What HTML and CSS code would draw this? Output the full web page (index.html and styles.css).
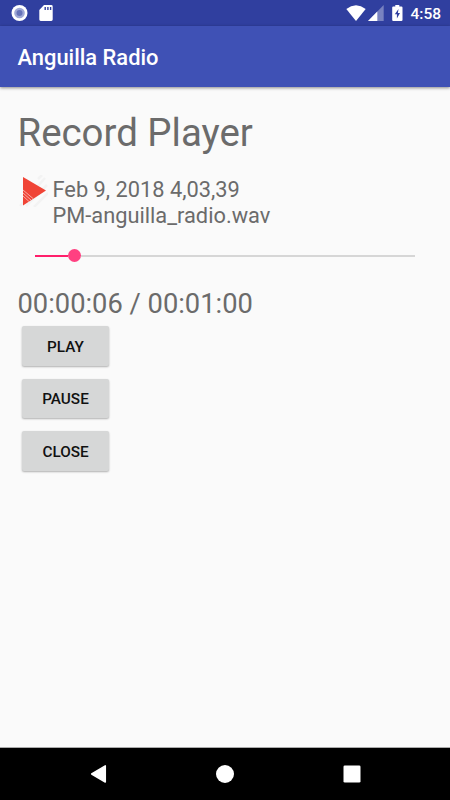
FILE: index.html
```html
<!DOCTYPE html>
<html lang="en">
<head>
    <meta charset="UTF-8">
    <meta name="viewport" content="width=device-width, initial-scale=1.0">
    <title>Anguilla Radio</title>
    <link rel="stylesheet" href="styles.css">
</head>
<body>
    <div class="status-bar">
        <svg class="record-icon" width="17" height="17" viewBox="0 0 17 17">
            <circle cx="8.5" cy="8" r="8" fill="#fff"/>
            <circle cx="8.5" cy="8" r="5.3" fill="#9fa8d6"/>
            <circle cx="8.5" cy="8" r="3" fill="#6673b9"/>
        </svg>
        <svg class="sd-icon" width="14" height="17" viewBox="0 0 14 17">
            <path d="M5 0h7.300q1.400 0 1.400 1.400v13.200q0 1.400-1.400 1.400H1.700Q.3 16 .3 14.600V5z" fill="#fff"/>
            <path d="M5.500 2h1.400v3H5.500zM8.200 2h1.400v3H8.200zM10.900 2h1.400v3h-1.400z" fill="#303f9f"/>
        </svg>
        <div class="status-right">
            <svg class="wifi-icon" width="20" height="17" viewBox="0 0 20 17">
                <path d="M.3 4Q10-3.400 19.700 4L10 16z" fill="#fff"/>
            </svg>
            <svg class="signal-icon" width="16" height="17" viewBox="0 0 16 17">
                <path d="M15.700 0v16H0z" fill="#7882c0"/>
                <path d="M9.300 6.500V16H0z" fill="#fff"/>
            </svg>
            <svg class="battery-icon" width="11" height="17" viewBox="0 0 11 17">
                <path d="M3.300 0h4v1.600h2q1.200 0 1.200 1V15q0 1-1.200 1h-8q-1.100 0-1.100-1V2.600q0-1 1.100-1h2z" fill="#fff"/>
                <path d="M6.500 4L2.800 9.200h2.100v4.300L8 8H5.900z" fill="#303f9f"/>
            </svg>
            <span class="clock">4:58</span>
        </div>
    </div>

    <header class="app-bar">Anguilla Radio</header>

    <main class="player">
        <h1>Record Player</h1>

        <div class="recording">
            <svg width="30" height="32" viewBox="0 0 30 32">
                <path d="M2 31L27 3M8 31L29 10M16 32L30 18M20 4L24 0" stroke="#f3f3f3" stroke-width="2.500"/>
                <path d="M5 2L28 15.500 5 30.500z" fill="#f04436"/>
                <path d="M5 15l10 8.500M5 18l8 7M5 21l6 5.500" stroke="#f9aaa4" stroke-width="1"/>
            </svg>
            <p class="file-name">Feb 9, 2018 4,03,39<br>PM-anguilla_radio.wav</p>
        </div>

        <div class="seek-bar">
            <div class="elapsed"></div>
            <div class="thumb"></div>
            <div class="remaining"></div>
        </div>

        <p class="time">00:00:06 / 00:01:00</p>

        <div class="controls">
            <button type="button" class="btn">PLAY</button>
            <button type="button" class="btn">PAUSE</button>
            <button type="button" class="btn">CLOSE</button>
        </div>
    </main>

    <nav class="nav-bar">
        <svg width="18" height="20" viewBox="0 0 18 20">
            <path d="M1.700 10L15.300 1.900v16.200z" fill="#fff" stroke="#fff" stroke-width="1.500" stroke-linejoin="round"/>
        </svg>
        <svg width="18" height="20" viewBox="0 0 18 20">
            <circle cx="9" cy="10" r="9" fill="#fff"/>
        </svg>
        <svg width="18" height="20" viewBox="0 0 18 20">
            <rect x=".5" y="1.500" width="17" height="17" rx="1.300" fill="#fff"/>
        </svg>
    </nav>
</body>
</html>
```
FILE: styles.css
```css
* {
    margin: 0;
    padding: 0;
    box-sizing: border-box;
}
body {
    display: flex;
    flex-direction: column;
    height: 100vh;
    overflow: hidden;
    font-family: Roboto, sans-serif;
    background: #fafafa;
    color: #6b6b6b;
}
svg {
    display: block;
    flex: none;
}
.status-bar {
    display: flex;
    flex: none;
    height: 26px;
    padding: 5px 9px 0 11px;
    background: #303f9f;
}
.sd-icon {
    margin-left: 11px;
}
.status-right {
    display: flex;
    margin-left: auto;
}
.signal-icon {
    margin-left: 2px;
}
.battery-icon {
    margin-left: 8px;
}
.clock {
    margin-left: 7px;
    color: #fff;
    font-size: 15.5px;
    font-weight: 500;
    line-height: 18px;
}
.app-bar {
    flex: none;
    height: 61px;
    padding-left: 17.5px;
    background: #3f51b5;
    color: #fff;
    font-size: 21.9px;
    font-weight: 500;
    line-height: 64px;
    box-shadow: 0 1px 3px rgba(0, 0, 0, 0.45);
}
.player {
    flex: 1;
    padding: 19px 17.5px 0;
}
h1 {
    font-size: 38.4px;
    font-weight: 400;
    line-height: 54px;
}
.recording {
    display: flex;
    margin-top: 15px;
}
.recording svg {
    margin-left: 0.5px;
}
.file-name {
    margin: 2px 0 0 4.5px;
    font-size: 21.8px;
    line-height: 25.6px;
}
.seek-bar {
    display: flex;
    align-items: center;
    height: 14px;
    margin: 20.5px 17.5px 0;
}
.elapsed {
    width: 32.5px;
    height: 2px;
    background: #ff1f6b;
}
.thumb {
    width: 13px;
    height: 13px;
    border-radius: 50%;
    background: #ff4081;
}
.remaining {
    flex: 1;
    height: 2px;
    background: #d6d6d6;
}
.time {
    margin-top: 24px;
    font-size: 27.3px;
    line-height: 34px;
}
.controls {
    display: flex;
    flex-direction: column;
    gap: 13px;
    margin: 5.5px 0 0 4.5px;
}
.btn {
    width: 87px;
    height: 39.5px;
    padding-top: 2px;
    border: none;
    border-radius: 2px;
    background: #d6d7d7;
    color: #111;
    font-family: inherit;
    font-size: 15.3px;
    font-weight: 500;
    box-shadow: 0 1px 2px rgba(0, 0, 0, 0.3);
}
.nav-bar {
    display: flex;
    flex: none;
    justify-content: space-between;
    height: 53px;
    padding: 16px 89.5px 0 90px;
    border-top: 1px solid #aaa;
    background: #000;
}
```
